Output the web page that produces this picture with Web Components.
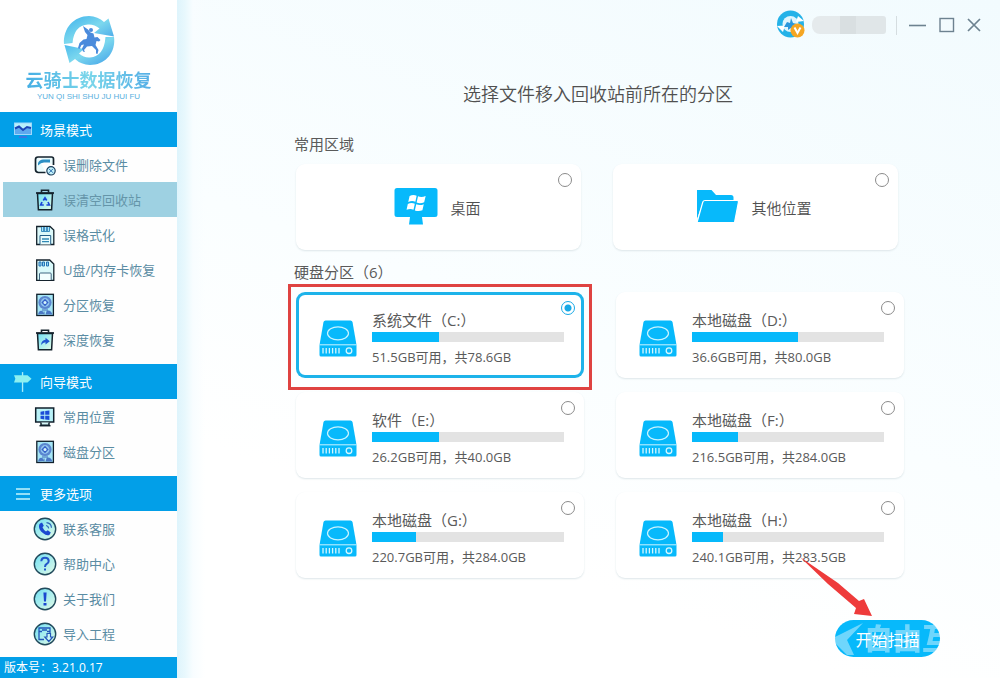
<!DOCTYPE html>
<html lang="zh-CN">
<head>
<meta charset="utf-8">
<meta name="viewport" content="width=device-width, initial-scale=1">
<title>云骑士数据恢复</title>
<style>
  body { margin: 0; font-family: "Open Sans", "Noto Sans CJK SC", sans-serif; font-weight: 350; color: #505050; }
</style>
</head>
<body>
<recovery-app></recovery-app>

<script>
const DEFS = `<defs>
  <linearGradient id="g" x1="0" y1="0" x2="1" y2="1"><stop offset="0" stop-color="#6fe0f5"/><stop offset="1" stop-color="#e4fbe6"/></linearGradient>
  <linearGradient id="ring" x1="0" y1="0" x2="1" y2="1"><stop offset="0" stop-color="#3bb0ec"/><stop offset=".5" stop-color="#7cd8ee"/><stop offset="1" stop-color="#3f9ee8"/></linearGradient>
</defs>`;
const bin = inner => `<path d="M8.500 4.500V2.200h7V4.500" fill="none" stroke="#14222c" stroke-width="1.600"/><path d="M4.500 5.500h15l-.9 16.200H5.400z" fill="url(#g)" stroke="#14222c" stroke-width="1.500"/><path d="M3 5h18" stroke="#14222c" stroke-width="1.700"/>${inner}`;
const disc = `<rect x="3.800" y="1.300" width="16.600" height="21.200" fill="#a6e6f6" stroke="#10202c" stroke-width="1.300"/><circle cx="12" cy="9.500" r="6.600" fill="#5b86cf"/><circle cx="12" cy="9.500" r="4.400" fill="#8fc4ee"/><path d="M12 5.800l3.600 3.700-3.600 3.700-3.600-3.700z" fill="#3560c8"/><circle cx="12" cy="9.500" r="1.500" fill="#d7f7fb"/><path d="M5 21.600q1-5 4.500-3.600l1.500 3zM12.500 21.600l1.200-3.800q4-1.400 5.700 3.800z" fill="#4b78c6"/><path d="M9 17h6M11 18.500v3" stroke="#3f68b8"/>`;
const round = inner => `<circle cx="12" cy="12" r="10.700" fill="url(#g)" stroke="#214a5c" stroke-width="1.400"/>${inner}`;
const flag = `<path d="M-8-5.500q3.500-1.600 6.700-.2L-2.500-.6q-3.100-1.200-6.800.1zM0-5.200q3.300 1.300 7.300-.2L5.900-.2q-3.800 1.500-7.200.3zM-9.700 1.200q3.400-1.400 6.700-.1L-4.300 6q-3-1.200-6.600.1zM-1.700 1.500q3.600 1.300 7.200-.1L4.200 6.500q-3.500 1.300-7.200.1z"/>`;
const ICONS = {
  monitor: ['0 0 18 18', `<rect x="0" y="1.500" width="18" height="12.500" fill="#9fd8fa"/><rect x="1" y="2.500" width="16" height="10.500" fill="#b8f0fc"/><path d="M1 7.500l4-2.500 4 3.500 3-1.500 5-1v7H1z" fill="#5fa9ee"/><path d="M1 7.500l4-2 4 3.500 4-3 4 1" fill="none" stroke="#1c46b8" stroke-width="2"/><path d="M5 16h8" stroke="#4a6be0" stroke-width="1.500"/>`],
  sign: ['0 0 20 22', `<path d="M9.500 0v22" stroke="#a8eefb" stroke-width="1.500"/><path d="M0 3.500h15l4.500 4-4.500 4H0l1.500-4z" fill="#8df0f0"/>`],
  bars: ['0 0 18 18', `<path d="M2 4h14M2 9h14M2 14h14" stroke="#c4f5fb" stroke-width="1.700"/>`],
  filex: ['0 0 24 24', `<path d="M5 4h13.500q2 0 2 2v6M12.500 19.500H5.500q-3 0-3-3V6.500q0-2.500 2.500-2.500" fill="#e9fbfd" stroke="#14222c" stroke-width="1.700"/><path d="M5 10q1.500-3.500 5-3.500h7v3h-6q-3 0-6 3z" fill="#2c8fc4"/><circle cx="18" cy="17.800" r="4.200" fill="#c4f1fa" stroke="#1b3f5c" stroke-width="1.200"/><path d="M16 15.800l4 4M20 15.800l-4 4" stroke="#2c6fb0"/>`],
  recycle: ['0 0 24 24', bin(`<path d="M10.300 12.500L12 9.800l1.700 2.700M15 14l1.400 3h-3M10.800 17H7.700L9 14" fill="none" stroke="#1a48d8" stroke-width="1.700"/>`)],
  floppy: ['0 0 24 24', `<path d="M3.700 3.500H17L20.800 7v14.500H3.700z" fill="#dcf9fa" stroke="#14222c" stroke-width="1.300"/><path d="M8.500 4v4.500h8V4" fill="#aee5f5" stroke="#3b8fc0"/><path d="M11 4v4M14 4v4" stroke="#2b7fb8" stroke-width="1.600"/><path d="M7 21.500v-9h10.700v9" fill="#eafcfd" stroke="#245f88"/><path d="M9 16h7M9 18.700h7" stroke="#3088b5" stroke-width="1.300"/>`],
  sdcard: ['0 0 24 24', `<path d="M3.700 2h13L20.800 6v16.300H3.700z" fill="#d9f9fa" stroke="#14222c" stroke-width="1.300"/><path d="M6 4h2v4H6zM9.500 4h2v4h-2zM13.500 4h2v4h-2z" fill="#8fd7f2" stroke="#2673b5"/><path d="M6.500 22v-6q0-1 1-1h9.700q1 0 1 1v6" fill="#f2fefe" stroke="#3f6680"/>`],
  disc: ['0 0 24 24', disc],
  binarrow: ['0 0 24 24', bin(`<path d="M8 17q.5-5 4.500-5.200V9.700l4.300 3.500-4.300 3.300v-2.200Q10 14.500 8 17z" fill="#1f55d0"/>`)],
  winpc: ['0 0 24 24', `<rect x="2.700" y="3" width="18" height="14" fill="#b9f1f7" stroke="#10202c" stroke-width="1.500"/><path d="M8 17.500v2.700h8v-2.700" fill="#d5f6f7" stroke="#10202c" stroke-width="1.500"/><path d="M6.500 20.700h11" stroke="#10202c" stroke-width="1.500"/><path d="M7.500 6.700l3.800-.6v3.700H7.500zM12.200 6l4.200-.6v4.400h-4.200zM7.500 10.700h3.800v3.700l-3.800-.6zM12.200 10.700h4.200V15l-4.200-.6z" fill="#1c4cd8"/>`],
  phone: ['0 0 24 24', round(`<path d="M7 6.500l2-1 1.800 3.200-1.300 1.500q1 2.600 3.500 4.200l1.700-1.200 3.100 2.300-1.200 2.200q-2.600 1.800-6.700-1.600T6 9.500q-.2-2 1-3z" fill="#1b49cf"/><path d="M13 8.500q2.300.3 2.700 2.800M13.500 5.700q4.500.3 5 5" fill="none" stroke="#2b63b8" stroke-width="1.200"/>`)],
  help: ['0 0 24 24', round(`<path d="M8.300 9.300q.2-3.500 3.700-3.500t3.700 3.100q0 1.800-2 3-1.700 1-1.700 3" fill="none" stroke="#2256c9" stroke-width="2"/><rect x="11" y="16.500" width="2" height="2" fill="#2256c9"/>`)],
  about: ['0 0 24 24', round(`<path d="M10.400 5.500h3.200l-.6 9h-2z" fill="#1b49cf"/><rect x="10.500" y="16" width="3" height="2.500" fill="#1b49cf"/>`)],
  import: ['0 0 24 24', round(`<path d="M11 17.500H6V6h11v5M6 9.500h3M14 9.500h3M9 8h5" fill="none" stroke="#2256b9" stroke-width="1.300"/><path d="M14 11.500h3.500v3.500h2.300l-4 4.500-4-4.500H14z" fill="#c9f6f5" stroke="#2256b9" stroke-width="1.200"/>`)],
  desktop: ['0 0 44 38', `<path d="M3 0h38q2.500 0 2.500 2.500v24Q43.500 29 41 29H28l1 7.500H15l1-7.500H3q-2.500 0-2.500-2.500v-24Q.500 0 3 0z" fill="#07b9fb"/><g fill="#fff" transform="translate(24 14.500) scale(1.050 1.200)">${flag}</g>`],
  folder: ['0 0 42 34', `<path d="M0 0h14.500l4.500 5h15q2.500 0 2.500 2.500V12H6L0 29z" fill="#07b9fb"/><path d="M8 10.500h32q1.800 0 1.400 1.800L37.500 32.500H0L5.800 12q.6-1.500 2.200-1.500z" fill="#07b9fb" stroke="#fff" stroke-width="1.200"/>`],
  drive: ['0 0 38 37', `<path d="M6.500.5h25q1.500 0 2 1.500l4 23v10q0 1.500-1.500 1.500H2Q.500 36.500.500 35V25l4-23q.5-1.500 2-1.500z" fill="#07b9fb"/><path d="M.500 24.800h37" stroke="#c9f3ff"/><ellipse cx="19" cy="13.300" rx="10.500" ry="6.500" fill="none" stroke="#c9f3ff" stroke-width="1.200"/><path d="M4 28v5.500M7.200 28v5.500M10.400 28v5.500M13.600 28v5.500M16.800 28v5.500M20 28v5.500" stroke="#d4f6ff" stroke-width="1.300"/><circle cx="30" cy="30.700" r="2.800" fill="none" stroke="#d4f6ff" stroke-width="1.300"/>`],
  logo: ['0 0 52 50', `<g fill="url(#ring)"><path d="M1 28C0 12 11 0 26 0q9 .5 15 6L45.500 2.500 51 20.500 31 17l5.500-4.500Q31 8 25 8.500 11 9.500 9.500 27z"/><path d="M51 21c2 15-8 28-24 28q-9-.3-15-6L6.500 47 1.500 29 21 33l-5 4.500q5 4.500 11 4 14-1 15.500-20.500z"/></g><g fill="#4a8bdc"><circle cx="28" cy="14" r="2"/><path d="M20 10l5 3.500 2.500 3 3 1 1 4 3-.5 3 3-1.500 1.500-2.500-.5-1 4 3 5-1 4-1.500-.5V34l-4-4-5 .5-3 3.500 1 2-2-.5-1-3 2-4-2.500.5-2 4-1.500-1 1.500-5 4-3.500 3-.5 1-4-2.500-3z"/></g>`],
  avatar: ['0 0 28 30', `<circle cx="13.500" cy="14" r="13.500" fill="#24b2e8"/><circle cx="13.500" cy="14" r="8" fill="#dff5fd"/><path d="M21 6l6 5-8 1zM6 22l-6-6 8-.5z" fill="#fff"/><path d="M7 17l3-5 3 1 1-5 2 5 4 1-2 2-1 5-3-3-3 2v-3z" fill="#2a97dc"/><circle cx="20.500" cy="20.500" r="7" fill="#f5a623"/><path d="M17.500 17.500l3 5.500 3-5.500" fill="none" stroke="#fff" stroke-width="2"/>`],
  min: ['0 0 18 16', `<path d="M0 8.500h17" stroke="#6d8290" stroke-width="1.600"/>`],
  max: ['0 0 16 16', `<rect x="1" y="1.500" width="13.500" height="13" fill="none" stroke="#6d8290" stroke-width="1.400"/>`],
  close: ['0 0 14 16', `<path d="M1 2l12 12M13 2L1 14" stroke="#6d8290" stroke-width="1.700"/>`]
};

class AppIcon extends HTMLElement {
  connectedCallback() {
    const [box, body] = ICONS[this.getAttribute('name')];
    this.attachShadow({ mode: 'open' }).innerHTML = `
      <style>:host{display:block;flex:none} svg{display:block;width:100%;height:100%}</style>
      <svg viewBox="${box}" aria-hidden="true">${DEFS}${body}</svg>`;
  }
}
customElements.define('app-icon', AppIcon);

class BrandLogo extends HTMLElement {
  constructor() {
    super();
    this.attachShadow({ mode: 'open' }).innerHTML = `
      <style>
        :host{display:flex;flex-direction:column;align-items:center;height:96px;padding-top:16px;background:#fff}
        app-icon{width:52px;height:50px}
        .name{font-size:18px;line-height:24px;font-weight:700;margin-top:2px;
          background:linear-gradient(90deg,#45aee4,#7ad6ea 50%,#55aee6);-webkit-background-clip:text;background-clip:text;color:transparent}
        .latin{font:8px/10px "Liberation Sans",sans-serif;color:#58b0de;white-space:nowrap}
      </style>
      <app-icon name="logo"></app-icon>
      <div class="name">云骑士数据恢复</div>
      <div class="latin">YUN QI SHI SHU JU HUI FU</div>`;
  }
}
customElements.define('brand-logo', BrandLogo);

class MenuGroup extends HTMLElement {
  connectedCallback() {
    this.attachShadow({ mode: 'open' }).innerHTML = `
      <style>
        :host{display:block;padding-bottom:7px}
        h2{margin:0;height:35px;padding-left:14px;display:flex;align-items:center;gap:8px;background:#029fe8;color:#fff;font-size:13px;font-weight:400}
        app-icon{width:18px;height:20px}
      </style>
      <h2><app-icon name="${this.getAttribute('icon')}"></app-icon>${this.getAttribute('heading')}</h2>
      <nav><slot></slot></nav>`;
  }
}
customElements.define('menu-group', MenuGroup);

class MenuItem extends HTMLElement {
  connectedCallback() {
    this.attachShadow({ mode: 'open' }).innerHTML = `
      <style>
        :host{display:block;padding-left:3px}
        a{display:flex;align-items:center;gap:6px;height:35px;padding-left:30px;color:#5a8ca3;font-size:13px;font-weight:400;text-decoration:none;white-space:nowrap}
        :host([current]) a{background:#9ed1e2;color:#6595a9}
        app-icon{width:24px;height:24px}
      </style>
      <a href="#${this.getAttribute('icon')}"><app-icon name="${this.getAttribute('icon')}"></app-icon><slot></slot></a>`;
  }
}
customElements.define('menu-item', MenuItem);

class SideBar extends HTMLElement {
  constructor() {
    super();
    this.attachShadow({ mode: 'open' }).innerHTML = `
      <style>
        :host{display:flex;flex-direction:column;background:#fefefe}
        .last{padding-bottom:0}
        footer{margin-top:auto;padding-left:4px;background:#029fe8;color:#fff;font-size:12px;line-height:21px;font-weight:400}
      </style>
      <brand-logo></brand-logo>
      <menu-group icon="monitor" heading="场景模式">
        <menu-item icon="filex">误删除文件</menu-item>
        <menu-item icon="recycle" current>误清空回收站</menu-item>
        <menu-item icon="floppy">误格式化</menu-item>
        <menu-item icon="sdcard">U盘/内存卡恢复</menu-item>
        <menu-item icon="disc">分区恢复</menu-item>
        <menu-item icon="binarrow">深度恢复</menu-item>
      </menu-group>
      <menu-group icon="sign" heading="向导模式">
        <menu-item icon="winpc">常用位置</menu-item>
        <menu-item icon="disc">磁盘分区</menu-item>
      </menu-group>
      <menu-group class="last" icon="bars" heading="更多选项">
        <menu-item icon="phone">联系客服</menu-item>
        <menu-item icon="help">帮助中心</menu-item>
        <menu-item icon="about">关于我们</menu-item>
        <menu-item icon="import">导入工程</menu-item>
      </menu-group>
      <footer>版本号：3.21.0.17</footer>`;
  }
}
customElements.define('side-bar', SideBar);

class WindowBar extends HTMLElement {
  constructor() {
    super();
    this.attachShadow({ mode: 'open' }).innerHTML = `
      <style>
        :host{display:flex;justify-content:flex-end;align-items:center;height:50px;padding-right:19px}
        .avatar{width:28px;height:30px;margin-right:7px}
        .user{width:74px;height:18px;border-radius:8px 3px 3px 8px;background:linear-gradient(90deg,#e5eaec 0 28px,#d9dfe1 28px 44px,#e0e6e8 44px)}
        .rule{width:1px;height:19px;margin:0 12px 0 10px;background:#d5dde0}
        button{border:0;padding:0;background:none;display:block}
        .min{width:18px;height:16px;margin-right:12px}
        .max{width:16px;height:16px;margin-right:12px}
        .close{width:14px;height:16px}
        button app-icon{height:16px}
      </style>
      <app-icon class="avatar" name="avatar"></app-icon>
      <div class="user"></div><div class="rule"></div>
      <button class="min" aria-label="最小化"><app-icon name="min"></app-icon></button>
      <button class="max" aria-label="最大化"><app-icon name="max"></app-icon></button>
      <button class="close" aria-label="关闭"><app-icon name="close"></app-icon></button>`;
  }
}
customElements.define('window-bar', WindowBar);

const CARD_CSS = `
  :host{display:block;position:relative}
  label{box-sizing:border-box;display:flex;height:86px;border-radius:9px;background:#fff;box-shadow:0 1px 2px #dde6e9}
  input{appearance:none;position:absolute;top:9px;right:9px;width:14px;height:14px;margin:0;box-sizing:border-box;border:1px solid #8b8b8b;border-radius:50%;background:#fff}
  input:checked{border-color:#18a9e6;background:radial-gradient(circle,#18a9e6 3px,#fff 4px)}
  label:has(input:checked){box-shadow:inset 0 0 0 3px #1db3ea}`;

class SelectableCard extends HTMLElement {
  wire() {
    this.input = this.shadowRoot.querySelector('input');
    this.input.checked = this.hasAttribute('selected');
    this.input.addEventListener('change', () =>
      this.dispatchEvent(new CustomEvent('pick', { bubbles: true, composed: true })));
  }
}

class PlaceCard extends SelectableCard {
  connectedCallback() {
    this.attachShadow({ mode: 'open' }).innerHTML = `
      <style>${CARD_CSS}
        label{align-items:center;justify-content:center;gap:12px;padding-right:2px;font-size:15px}
        app-icon{width:44px;height:38px}
        app-icon[name=folder]{width:42px;height:34px}
      </style>
      <label><app-icon name="${this.getAttribute('icon')}"></app-icon><slot></slot><input type="radio"></label>`;
    this.wire();
  }
}
customElements.define('place-card', PlaceCard);

class DriveCard extends SelectableCard {
  connectedCallback() {
    this.attachShadow({ mode: 'open' }).innerHTML = `
      <style>${CARD_CSS}
        label{gap:15px;padding:18px 20px 0 23px;font-weight:400;color:#5a5a5a}
        app-icon{width:38px;height:37px;margin-top:10px}
        .info{flex:1;min-width:0}
        .name{font-size:15px;line-height:20px}
        .stat{font-size:13px;line-height:20px;margin-top:5px;white-space:nowrap}
        progress{appearance:none;display:block;width:100%;height:10px;margin-top:2px;border:0;background:#e3e3e3}
        progress::-webkit-progress-bar{background:#e3e3e3}
        progress::-webkit-progress-value{background:#07b9fb}
      </style>
      <label><app-icon name="drive"></app-icon>
        <div class="info">
          <div class="name"><slot></slot></div>
          <progress max="100" value="${this.getAttribute('used')}"></progress>
          <div class="stat">${this.getAttribute('free')}GB可用，共${this.getAttribute('total')}GB</div>
        </div><input type="radio"></label>
      <slot name="mark"></slot>`;
    this.wire();
  }
}
customElements.define('drive-card', DriveCard);

class ScanButton extends HTMLElement {
  constructor() {
    super();
    this.attachShadow({ mode: 'open' }).innerHTML = `
      <style>
        :host{display:block;position:relative}
        button{display:block;width:105px;height:37px;padding:0;border:0;border-radius:19px;background:#07b9fb;color:#fff;font:inherit;font-size:16px;font-weight:400}
        .arrow{position:absolute;right:66px;bottom:40px;width:76px;height:60px}
        .mark{position:absolute;left:0;top:0;display:flex;align-items:center;height:37px;color:#fff;opacity:.42;font-size:29px;line-height:37px;font-weight:900;white-space:nowrap;pointer-events:none}
        .mark svg{width:29px;height:36px}
      </style>
      <button>开始扫描</button>
      <div class="mark" aria-hidden="true"><svg viewBox="0 0 29 36"><path d="M28 2L0 16v6l12 12h7l-7-15z" fill="#fff"/></svg>自由互联</div>
      <svg class="arrow" viewBox="0 0 76 60" aria-hidden="true"><path d="M2 0L40 26 61 44 66 42 74 59 56 57 58 51 30 27z" fill="#ee3b3b"/></svg>`;
  }
}
customElements.define('scan-button', ScanButton);

class RecoveryApp extends HTMLElement {
  constructor() {
    super();
    this.attachShadow({ mode: 'open' }).innerHTML = `
      <style>
        :host{display:grid;grid-template-columns:177px 1fr;min-height:100vh}
        main{min-width:0;overflow:hidden;display:flex;flex-direction:column;
          background:linear-gradient(90deg,#def4fc 0,#e8f8fd 8px,#f8fdff 16px,#fff0 28px),linear-gradient(20deg,#fff 25%,#fafeff 50%,#f2fbfe)}
        h1{margin:30px 0 0;padding-left:19px;font-size:18px;line-height:28px;font-weight:350;text-align:center}
        h2{margin:0 0 0 -2px;font-size:15px;line-height:20px;font-weight:400;color:#5a5a5a}
        section{padding:0 96px 0 119px}
        .first{margin-top:26px;padding-right:102px}
        .second{margin-top:12px}
        .grid{display:grid;grid-template-columns:1fr 1fr;gap:14px 32px;margin-top:10px}
        .frame{position:absolute;inset:-8px -8px -12px;border:3px solid #df4341;pointer-events:none}
        .actions{display:flex;justify-content:flex-end;padding:42px 60px 20px 0}
      </style>
      <side-bar></side-bar>
      <main>
        <window-bar></window-bar>
        <h1>选择文件移入回收站前所在的分区</h1>
        <section class="first">
          <h2>常用区域</h2>
          <div class="grid">
            <place-card icon="desktop">桌面</place-card>
            <place-card icon="folder">其他位置</place-card>
          </div>
        </section>
        <section class="second">
          <h2>硬盘分区（6）</h2>
          <div class="grid">
            <drive-card selected used="35" free="51.5" total="78.6">系统文件（C:）<div slot="mark" class="frame"></div></drive-card>
            <drive-card used="55" free="36.6" total="80.0">本地磁盘（D:）</drive-card>
            <drive-card used="35" free="26.2" total="40.0">软件（E:）</drive-card>
            <drive-card used="24" free="216.5" total="284.0">本地磁盘（F:）</drive-card>
            <drive-card used="23" free="220.7" total="284.0">本地磁盘（G:）</drive-card>
            <drive-card used="16" free="240.1" total="283.5">本地磁盘（H:）</drive-card>
          </div>
        </section>
        <div class="actions"><scan-button></scan-button></div>
      </main>`;
    this.shadowRoot.addEventListener('pick', e => {
      for (const card of this.shadowRoot.querySelectorAll('place-card, drive-card'))
        if (card !== e.target) card.input.checked = false;
    });
  }
}
customElements.define('recovery-app', RecoveryApp);
</script>
</body>
</html>
